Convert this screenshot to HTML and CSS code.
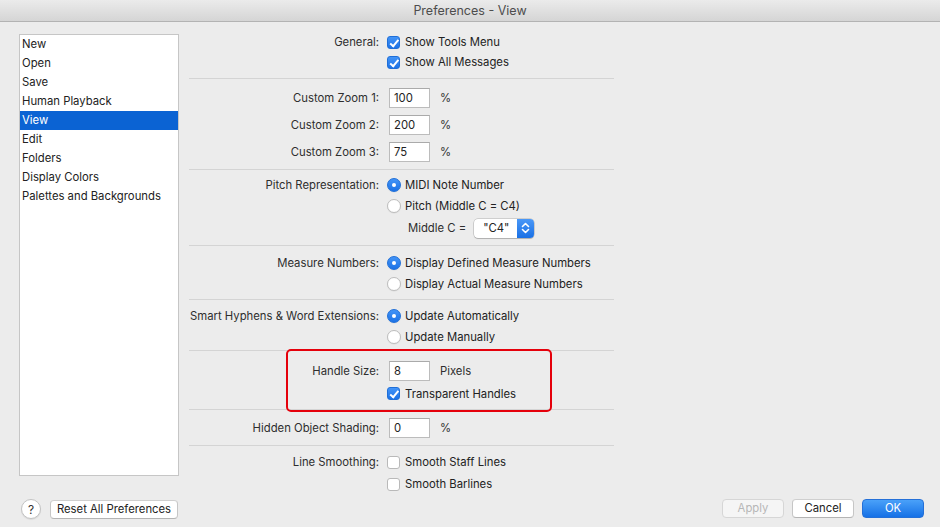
FILE: index.html
```html
<!DOCTYPE html>
<html>
<head>
<meta charset="utf-8">
<link rel="stylesheet" href="styles.css">
</head>
<body>
<div class="window">
  <div class="titlebar">Preferences - View</div>
  <div class="main">
    <ul class="sidebar">
      <li>New</li>
      <li>Open</li>
      <li>Save</li>
      <li>Human Playback</li>
      <li class="selected">View</li>
      <li>Edit</li>
      <li>Folders</li>
      <li>Display Colors</li>
      <li>Palettes and Backgrounds</li>
    </ul>
    <div class="panel">
      <div class="section s1">
        <div class="row r20"><span class="label">General:</span><span class="ctl"><span class="cb on"></span>Show Tools Menu</span></div>
        <div class="row r20"><span class="label"></span><span class="ctl"><span class="cb on"></span>Show All Messages</span></div>
      </div>
      <div class="section s2">
        <div class="row r27"><span class="label">Custom Zoom 1:</span><span class="ctl"><span class="field">100</span><span class="unit">%</span></span></div>
        <div class="row r27"><span class="label">Custom Zoom 2:</span><span class="ctl"><span class="field">200</span><span class="unit">%</span></span></div>
        <div class="row r27"><span class="label">Custom Zoom 3:</span><span class="ctl"><span class="field">75</span><span class="unit">%</span></span></div>
      </div>
      <div class="section s3">
        <div class="row r21"><span class="label">Pitch Representation:</span><span class="ctl"><span class="rb on"></span>MIDI Note Number</span></div>
        <div class="row r21"><span class="label"></span><span class="ctl"><span class="rb"></span>Pitch (Middle C = C4)</span></div>
        <div class="row r24"><span class="label"></span><span class="ctl indent"><span class="sublabel">Middle C =</span><span class="popup"><span class="popup-text">"C4"</span><span class="popup-arrows"><svg width="9" height="12" viewBox="0 0 9 12"><path d="M1.5 4.5 L4.5 1.5 L7.5 4.5 M1.5 7.5 L4.5 10.5 L7.5 7.5" fill="none" stroke="#fff" stroke-width="1.6" stroke-linecap="round" stroke-linejoin="round"/></svg></span></span></span></div>
      </div>
      <div class="section s4">
        <div class="row r21"><span class="label">Measure Numbers:</span><span class="ctl"><span class="rb on"></span>Display Defined Measure Numbers</span></div>
        <div class="row r21"><span class="label"></span><span class="ctl"><span class="rb"></span>Display Actual Measure Numbers</span></div>
      </div>
      <div class="section s5">
        <div class="row r21"><span class="label">Smart Hyphens &amp; Word Extensions:</span><span class="ctl"><span class="rb on"></span>Update Automatically</span></div>
        <div class="row r21"><span class="label"></span><span class="ctl"><span class="rb"></span>Update Manually</span></div>
      </div>
      <div class="section s6">
        <div class="highlight"></div>
        <div class="row r24"><span class="label">Handle Size:</span><span class="ctl"><span class="field">8</span><span class="unit">Pixels</span></span></div>
        <div class="row r21"><span class="label"></span><span class="ctl"><span class="cb on"></span>Transparent Handles</span></div>
      </div>
      <div class="section s7">
        <div class="row r27"><span class="label">Hidden Object Shading:</span><span class="ctl"><span class="field">0</span><span class="unit">%</span></span></div>
      </div>
      <div class="section s8">
        <div class="row r22"><span class="label">Line Smoothing:</span><span class="ctl"><span class="cb"></span>Smooth Staff Lines</span></div>
        <div class="row r22"><span class="label"></span><span class="ctl"><span class="cb"></span>Smooth Barlines</span></div>
      </div>
    </div>
  </div>
  <div class="footer">
    <div class="footer-left">
      <span class="help">?</span>
      <span class="btn reset">Reset All Preferences</span>
    </div>
    <div class="footer-right">
      <span class="btn disabled">Apply</span>
      <span class="btn">Cancel</span>
      <span class="btn primary">OK</span>
    </div>
  </div>
</div>
</body>
</html>
```
FILE: styles.css
```css
* { box-sizing: border-box; }
html, body { margin: 0; padding: 0; }
body {
  width: 940px;
  height: 527px;
  background: #ececec;
  font-family: "Inter", "Liberation Sans", sans-serif;
  font-size: 11.3px;
  color: #222;
  overflow: hidden;
}
.window {
  display: flex;
  flex-direction: column;
  height: 527px;
}
.titlebar {
  height: 22px;
  flex: none;
  background: linear-gradient(#ebebeb, #d5d5d5);
  border-bottom: 1px solid #b3b3b3;
  text-align: center;
  font-size: 12.5px;
  line-height: 22px;
  color: #4d4d4d;
}
.main {
  flex: none;
  height: 468px;
  display: flex;
  padding-left: 19px;
  gap: 10px;
}
.sidebar {
  list-style: none;
  margin: 12px 0 0 0;
  padding: 0;
  width: 160px;
  height: 442px;
  background: #fff;
  border: 1px solid #c6c6c6;
  flex: none;
}
.sidebar li {
  height: 19px;
  line-height: 19px;
  padding-left: 2px;
  color: #222;
}
.sidebar li.selected {
  background: #0b63d3;
  color: #fff;
}
.panel {
  width: 425px;
  flex: none;
  display: flex;
  flex-direction: column;
}
.section {
  border-bottom: 1px solid #d4d4d4;
  position: relative;
}
.s1 { padding: 10px 0 6px; }
.s2 { padding: 5px 0 4px; }
.s3 { padding: 4px 0 5px; }
.s4 { padding: 6px 0 5px; }
.s5 { padding: 5px 0 3px; }
.s6 { padding: 8px 0 5px; }
.s7 { padding: 4px 0 4px; }
.s8 { padding: 5px 0 0; border-bottom: none; }
.row {
  display: flex;
  align-items: center;
}
.r20 { height: 20px; }
.r21 { height: 21px; }
.r22 { height: 22px; }
.r24 { height: 24px; }
.r27 { height: 27px; }
.label {
  width: 190px;
  text-align: right;
  color: #2e2e2e;
  flex: none;
  white-space: nowrap;
}
.ctl {
  display: flex;
  align-items: center;
  margin-left: 8px;
  white-space: nowrap;
}
.ctl.indent { margin-left: 29px; }
.cb {
  width: 13px;
  height: 13px;
  border-radius: 3px;
  background: #fff;
  border: 1px solid #b9b9b9;
  margin-right: 5px;
  position: relative;
  flex: none;
}
.cb.on {
  background: linear-gradient(#4394f7, #1c72e6);
  border-color: #1f6fd8;
}
.cb.on::after {
  content: "";
  position: absolute;
  left: 3.5px;
  top: 1px;
  width: 3px;
  height: 6.5px;
  border-right: 2px solid #fff;
  border-bottom: 2px solid #fff;
  transform: rotate(40deg);
}
.rb {
  width: 14px;
  height: 14px;
  border-radius: 50%;
  background: #fff;
  border: 1px solid #bdbdbd;
  box-shadow: 0 0.5px 1px rgba(0,0,0,0.08);
  margin-right: 4px;
  position: relative;
  flex: none;
}
.rb.on {
  background: linear-gradient(#4394f7, #1c72e6);
  border-color: #1f6fd8;
}
.rb.on::after {
  content: "";
  position: absolute;
  left: 4px;
  top: 4px;
  width: 4px;
  height: 4px;
  border-radius: 50%;
  background: #fff;
}
.field {
  width: 41px;
  height: 20px;
  margin-left: 2px;
  background: #fff;
  border: 1px solid #bcbcbc;
  border-top-color: #aaa;
  padding-left: 4px;
  line-height: 18px;
  color: #222;
}
.unit {
  margin-left: 10px;
  color: #2e2e2e;
}
.sublabel { color: #2e2e2e; margin-right: 8px; }
.popup {
  display: flex;
  align-items: center;
  width: 60px;
  height: 19px;
  background: #fff;
  border-radius: 4px;
  box-shadow: 0 0 0 0.5px rgba(0,0,0,0.25), 0 1px 1px rgba(0,0,0,0.15);
  overflow: hidden;
}
.popup-text {
  flex: 1;
  padding-left: 9px;
  color: #222;
}
.popup-arrows {
  width: 17px;
  height: 19px;
  background: linear-gradient(#4a98f7, #1a70e5);
  display: flex;
  align-items: center;
  justify-content: center;
}
.highlight {
  position: absolute;
  left: 97px;
  top: -2px;
  width: 266px;
  height: 63px;
  border: 2.5px solid #e5000b;
  border-radius: 5px;
}
.footer {
  height: 37px;
  flex: none;
  display: flex;
  align-items: flex-start;
  justify-content: space-between;
  padding: 9px 16px 0 21px;
}
.footer-left, .footer-right {
  display: flex;
  align-items: center;
  gap: 9px;
}
.footer-right { gap: 8px; }
.help {
  width: 20px;
  height: 20px;
  border-radius: 50%;
  background: #fff;
  border: 1px solid #c3c3c3;
  box-shadow: 0 1px 1px rgba(0,0,0,0.08);
  display: flex;
  align-items: center;
  justify-content: center;
  font-size: 12px;
  color: #333;
}
.btn {
  height: 19px;
  line-height: 17px;
  background: #fff;
  border: 1px solid #c6c6c6;
  border-top-color: #cfcfcf;
  border-bottom-color: #b4b4b4;
  border-radius: 4px;
  text-align: center;
  width: 62px;
  color: #222;
  font-size: 11.3px;
}
.btn.reset { width: 128px; }
.btn.disabled {
  background: #f5f5f5;
  color: #b7b7b7;
  border-color: #d6d6d6;
}
.btn.primary {
  background: linear-gradient(#4aa1f9, #1671e6);
  border-color: #2470d8;
  color: #fff;
}
```
